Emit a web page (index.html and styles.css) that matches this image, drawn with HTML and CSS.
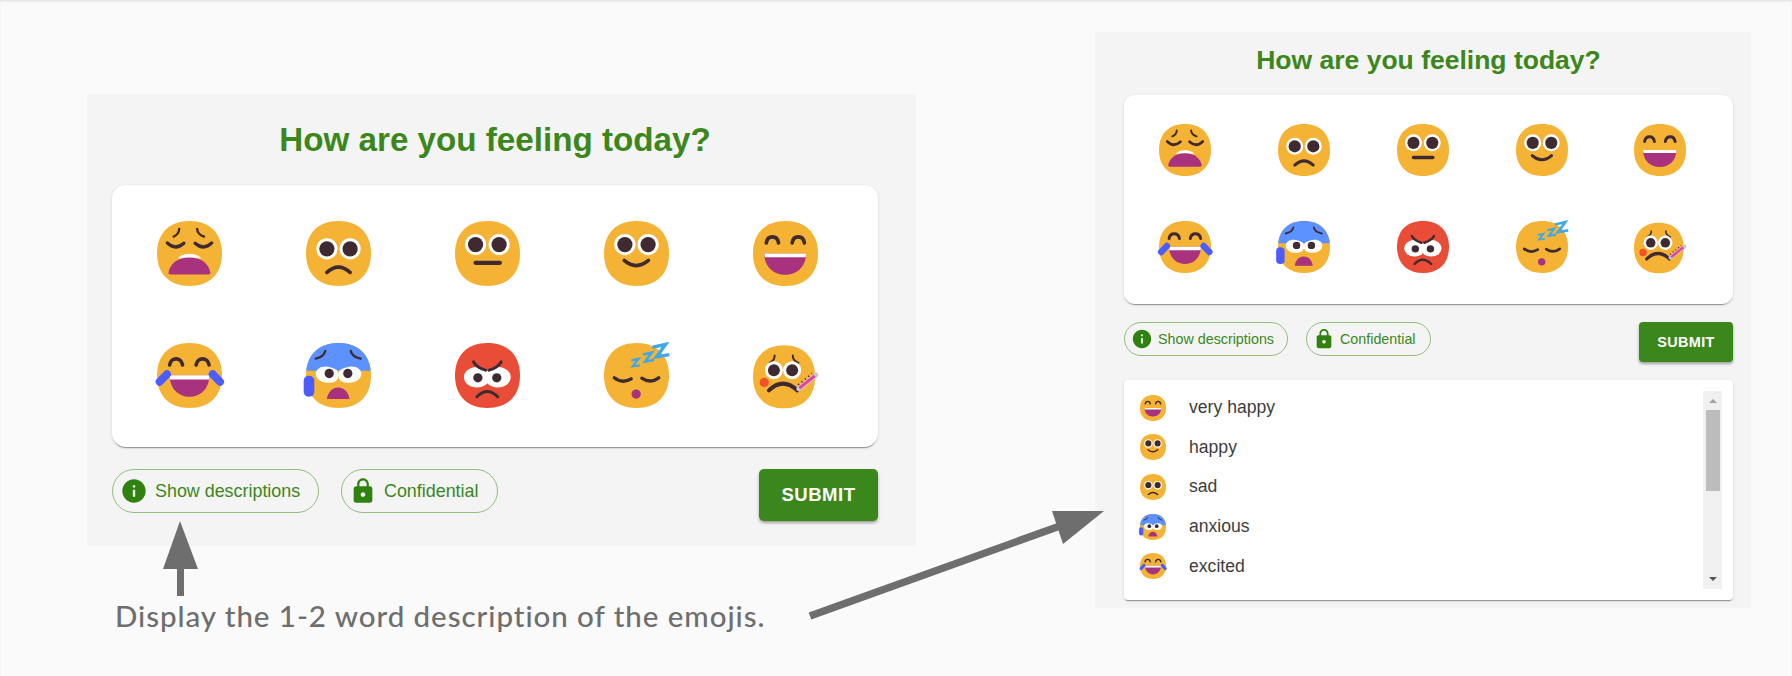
FILE: index.html
```html
<!DOCTYPE html>
<html lang="en">
<head>
<meta charset="utf-8">
<title>How are you feeling today?</title>
<link rel="stylesheet" href="styles.css">
</head>
<body>
<svg class="defs" width="0" height="0" aria-hidden="true">
  <defs>
    <path id="face" d="M98 0C160 0 196 38 196 98C196 158 160 196 98 196C36 196 0 158 0 98C0 38 36 0 98 0Z"/>
    <g id="e-weary">
      <use href="#face" fill="#f5b335"/>
      <g fill="none" stroke="#402a32" stroke-linecap="round">
        <path d="M31 66Q55 90 81 67" stroke-width="10"/><path d="M115 67Q141 90 165 66" stroke-width="10"/>
        <path d="M67 24Q66 40 50 47" stroke-width="7"/><path d="M121 24Q122 40 142 47" stroke-width="7"/>
      </g>
      <path d="M62 112C72 103 85 99 98 99C111 99 124 103 134 112Z" fill="#fff"/>
      <path d="M35 154C40 130 60 110 98 110C136 110 155 130 161 154C162 160 158 161 155 161L42 161C37 161 34 160 35 154Z" fill="#a9327f"/>
    </g>
    <g id="e-sad">
      <use href="#face" fill="#f5b335"/>
      <circle cx="63" cy="84" r="32" fill="#fff"/><circle cx="133" cy="84" r="32" fill="#fff"/>
      <circle cx="63" cy="84" r="23" fill="#402a32"/><circle cx="133" cy="84" r="23" fill="#402a32"/>
      <path d="M63 155Q98 123 133 155" fill="none" stroke="#402a32" stroke-width="11" stroke-linecap="round"/>
    </g>
    <g id="e-neutral">
      <use href="#face" fill="#f5b335"/>
      <circle cx="62" cy="71" r="32" fill="#fff"/><circle cx="133" cy="71" r="32" fill="#fff"/>
      <circle cx="62" cy="71" r="23" fill="#402a32"/><circle cx="133" cy="71" r="23" fill="#402a32"/>
      <path d="M62 126H135" fill="none" stroke="#402a32" stroke-width="13" stroke-linecap="round"/>
    </g>
    <g id="e-smile">
      <use href="#face" fill="#f5b335"/>
      <circle cx="63" cy="71" r="32" fill="#fff"/><circle cx="133" cy="71" r="32" fill="#fff"/>
      <circle cx="63" cy="71" r="23" fill="#402a32"/><circle cx="133" cy="71" r="23" fill="#402a32"/>
      <path d="M61 119Q97 150 134 119" fill="none" stroke="#402a32" stroke-width="11" stroke-linecap="round"/>
    </g>
    <g id="e-grin">
      <use href="#face" fill="#f5b335"/>
      <g fill="none" stroke="#402a32" stroke-width="11" stroke-linecap="round">
        <path d="M40 66C44 42 73 42 77 66"/><path d="M118 66C122 42 151 42 155 66"/>
      </g>
      <path d="M34 98H160C160 140 130 162 97 162C64 162 34 140 34 98Z" fill="#a9327f"/>
      <path d="M34 98H160L159 109H36Z" fill="#fff"/>
    </g>
    <g id="e-joy">
      <use href="#face" fill="#f5b335"/>
      <g fill="none" stroke="#402a32" stroke-width="11" stroke-linecap="round">
        <path d="M38 66C42 42 73 42 77 66"/><path d="M118 66C122 42 153 42 157 66"/>
      </g>
      <path d="M38 97H158C158 138 130 162 98 162C66 162 38 138 38 97Z" fill="#a9327f"/>
      <path d="M38 97H158L157 110H39Z" fill="#fff"/>
      <g fill="none" stroke="#4d5cff" stroke-width="24" stroke-linecap="round">
        <path d="M30 94L8 117"/><path d="M168 94L190 117"/>
      </g>
    </g>
    <clipPath id="top-clip"><rect x="0" y="0" width="196" height="84"/></clipPath>
    <g id="e-anxious">
      <use href="#face" fill="#f5b335"/>
      <use href="#face" fill="#5c92ff" clip-path="url(#top-clip)"/>
      <g fill="none" stroke="#402a32" stroke-width="7" stroke-linecap="round">
        <path d="M58 24Q54 42 29 47"/><path d="M135 24Q139 42 165 47"/>
      </g>
      <path d="M29 92C32 70 62 62 94 82C103 96 100 120 70 120C48 120 29 110 29 92Z" fill="#fff"/>
      <path d="M167 92C164 70 134 62 102 82C93 96 96 120 126 120C148 120 167 110 167 92Z" fill="#fff"/>
      <circle cx="70" cy="92" r="14" fill="#402a32"/><circle cx="126" cy="92" r="14" fill="#402a32"/>
      <path d="M63 169C65 150 78 134 97 134C116 134 129 150 131 169Z" fill="#a9327f"/>
      <rect x="-7" y="99" width="32" height="63" rx="15" fill="#4d5cff"/>
    </g>
    <g id="e-angry">
      <use href="#face" fill="#e94d38"/>
      <ellipse cx="66" cy="103" rx="39" ry="31" fill="#fff"/><ellipse cx="129" cy="103" rx="39" ry="31" fill="#fff"/>
      <circle cx="69" cy="105" r="14" fill="#402a32"/><circle cx="126" cy="105" r="14" fill="#402a32"/>
      <g fill="none" stroke="#402a32" stroke-width="9" stroke-linecap="round">
        <path d="M56 57Q66 74 92 82"/><path d="M139 57Q129 74 103 82"/>
        <path d="M66 162Q97 130 129 162"/>
      </g>
    </g>
    <g id="e-sleep">
      <use href="#face" fill="#f5b335"/>
      <g fill="none" stroke="#402a32" stroke-width="10" stroke-linecap="round">
        <path d="M31 105Q55 124 82 108"/><path d="M114 106Q140 124 165 105"/>
      </g>
      <circle cx="97" cy="154" r="14" fill="#a9327f"/>
      <g fill="none" stroke="#3fa9e8" stroke-linejoin="miter" stroke-linecap="square">
        <polyline points="86,52 104,48 87,70 105,68" stroke-width="7"/>
        <polyline points="121,34 144,29 124,56 147,52" stroke-width="8"/>
        <polyline points="151,12 186,4 158,42 192,36" stroke-width="10"/>
      </g>
    </g>
    <g id="e-sick">
      <g transform="translate(0 7) scale(.955 .97)"><use href="#face" fill="#f5b335"/></g>
      <g fill="none" stroke="#402a32" stroke-width="6" stroke-linecap="round">
        <path d="M65 38Q66 52 50 60"/><path d="M120 38Q119 52 137 60"/>
      </g>
      <circle cx="63" cy="82" r="27" fill="#fff"/><circle cx="118" cy="82" r="27" fill="#fff"/>
      <circle cx="63" cy="82" r="18" fill="#402a32"/><circle cx="118" cy="82" r="18" fill="#402a32"/>
      <circle cx="34" cy="119" r="14" fill="#f4502a"/>
      <path d="M48 143Q90 102 134 143" fill="none" stroke="#402a32" stroke-width="12" stroke-linecap="round"/>
      <path d="M138 138L190 96" fill="none" stroke="#c9c9c9" stroke-width="15" stroke-linecap="round"/>
      <path d="M140 136L186 99" fill="none" stroke="#e83e9c" stroke-width="9"/>
      <path d="M136 126L178 92" fill="none" stroke="#402a32" stroke-width="5" stroke-dasharray="4 9"/>
    </g>
  </defs>
</svg>

<main class="page">
  <section class="panel panel-large">
    <h1 class="heading">How are you feeling today?</h1>
    <div class="card emoji-grid">
      <svg class="emoji" viewBox="0 0 196 196"><use href="#e-weary"/></svg>
      <svg class="emoji" viewBox="0 0 196 196"><use href="#e-sad"/></svg>
      <svg class="emoji" viewBox="0 0 196 196"><use href="#e-neutral"/></svg>
      <svg class="emoji" viewBox="0 0 196 196"><use href="#e-smile"/></svg>
      <svg class="emoji" viewBox="0 0 196 196"><use href="#e-grin"/></svg>
      <svg class="emoji" viewBox="0 0 196 196"><use href="#e-joy"/></svg>
      <svg class="emoji" viewBox="0 0 196 196"><use href="#e-anxious"/></svg>
      <svg class="emoji" viewBox="0 0 196 196"><use href="#e-angry"/></svg>
      <svg class="emoji" viewBox="0 0 196 196"><use href="#e-sleep"/></svg>
      <svg class="emoji" viewBox="0 0 196 196"><use href="#e-sick"/></svg>
    </div>
    <div class="actions">
      <span class="chip chip-show"><svg class="chip-icon" viewBox="0 0 24 24"><path d="M12 2C6.48 2 2 6.48 2 12s4.48 10 10 10 10-4.48 10-10S17.52 2 12 2zm1 15h-2v-6h2v6zm0-8h-2V7h2v2z"/></svg>Show descriptions</span>
      <span class="chip chip-conf"><svg class="chip-icon" viewBox="0 0 24 24"><path d="M18 8h-1V6c0-2.76-2.24-5-5-5S7 3.24 7 6v2H6c-1.1 0-2 .9-2 2v10c0 1.1.9 2 2 2h12c1.1 0 2-.9 2-2V10c0-1.1-.9-2-2-2zm-6 9c-1.1 0-2-.9-2-2s.9-2 2-2 2 .9 2 2-.9 2-2 2zm3.1-9H8.9V6c0-1.71 1.39-3.1 3.1-3.1 1.71 0 3.1 1.39 3.1 3.1v2z"/></svg>Confidential</span>
      <button class="submit" type="button">Submit</button>
    </div>
  </section>

  <section class="panel panel-small">
    <h1 class="heading">How are you feeling today?</h1>
    <div class="card emoji-grid">
      <svg class="emoji" viewBox="0 0 196 196"><use href="#e-weary"/></svg>
      <svg class="emoji" viewBox="0 0 196 196"><use href="#e-sad"/></svg>
      <svg class="emoji" viewBox="0 0 196 196"><use href="#e-neutral"/></svg>
      <svg class="emoji" viewBox="0 0 196 196"><use href="#e-smile"/></svg>
      <svg class="emoji" viewBox="0 0 196 196"><use href="#e-grin"/></svg>
      <svg class="emoji" viewBox="0 0 196 196"><use href="#e-joy"/></svg>
      <svg class="emoji" viewBox="0 0 196 196"><use href="#e-anxious"/></svg>
      <svg class="emoji" viewBox="0 0 196 196"><use href="#e-angry"/></svg>
      <svg class="emoji" viewBox="0 0 196 196"><use href="#e-sleep"/></svg>
      <svg class="emoji" viewBox="0 0 196 196"><use href="#e-sick"/></svg>
    </div>
    <div class="actions">
      <span class="chip chip-show"><svg class="chip-icon" viewBox="0 0 24 24"><path d="M12 2C6.48 2 2 6.48 2 12s4.48 10 10 10 10-4.48 10-10S17.52 2 12 2zm1 15h-2v-6h2v6zm0-8h-2V7h2v2z"/></svg>Show descriptions</span>
      <span class="chip chip-conf"><svg class="chip-icon" viewBox="0 0 24 24"><path d="M18 8h-1V6c0-2.76-2.24-5-5-5S7 3.24 7 6v2H6c-1.1 0-2 .9-2 2v10c0 1.1.9 2 2 2h12c1.1 0 2-.9 2-2V10c0-1.1-.9-2-2-2zm-6 9c-1.1 0-2-.9-2-2s.9-2 2-2 2 .9 2 2-.9 2-2 2zm3.1-9H8.9V6c0-1.71 1.39-3.1 3.1-3.1 1.71 0 3.1 1.39 3.1 3.1v2z"/></svg>Confidential</span>
      <button class="submit" type="button">Submit</button>
    </div>
    <div class="desc-card">
      <ul class="desc-list">
        <li class="desc-row"><svg class="desc-emoji" viewBox="0 0 196 196"><use href="#e-grin"/></svg>very happy</li>
        <li class="desc-row"><svg class="desc-emoji" viewBox="0 0 196 196"><use href="#e-smile"/></svg>happy</li>
        <li class="desc-row"><svg class="desc-emoji" viewBox="0 0 196 196"><use href="#e-sad"/></svg>sad</li>
        <li class="desc-row"><svg class="desc-emoji" viewBox="0 0 196 196"><use href="#e-anxious"/></svg>anxious</li>
        <li class="desc-row"><svg class="desc-emoji" viewBox="0 0 196 196"><use href="#e-joy"/></svg>excited</li>
      </ul>
      <div class="scrollbar">
        <span class="scroll-up"></span>
        <span class="scroll-thumb"></span>
        <span class="scroll-down"></span>
      </div>
    </div>
  </section>

  <svg class="arrows" viewBox="0 0 1792 676" aria-hidden="true">
    <path class="arrow-fill" d="M180 521L198 569H184V596H177V569H163Z"/>
    <path class="arrow-fill" d="M1104 511L1052 511L1063 544Z"/>
    <path class="arrow-line" d="M810 616L1060 526"/>
  </svg>
  <p class="caption">Display the 1-2 word description of the emojis.</p>
</main>
</body>
</html>
```
FILE: styles.css
```css
* { box-sizing: border-box; }
html, body { margin: 0; height: 100%; }
body {
  background: #fafafa;
  font-family: "Liberation Sans", Arial, sans-serif;
  overflow: hidden;
}
.defs { position: absolute; }
.page {
  position: relative;
  width: 1792px;
  height: 676px;
  display: flex;
  align-items: flex-start;
  box-shadow: inset 0 2px 3px -1px rgba(0, 0, 0, .12);
}
.panel { background: #f4f4f4; }
.panel-large {
  width: 829px;
  height: 452px;
  margin: 94px 0 0 87px;
  padding: 0 38px 0 25px;
}
.panel-small {
  width: 656px;
  height: 576px;
  margin: 32px 0 0 179px;
  padding: 0 18px 0 29px;
}
.heading {
  margin: 0;
  color: #3b871b;
  text-align: center;
  font-weight: 700;
}
.panel-large .heading { font-size: 33.2px; line-height: 91px; }
.panel-small .heading { font-size: 26.5px; line-height: 56px; padding-bottom: 7px; }
.card, .desc-card {
  background: #fff;
  box-shadow: 0 2px 1px -1px rgba(0, 0, 0, .35), 0 1px 3px rgba(0, 0, 0, .14);
}
.emoji-grid { display: grid; justify-items: center; align-items: start; }
.panel-large .emoji-grid {
  height: 262px;
  padding: 36px 0 0 3px;
  border-radius: 14px;
  grid-template-columns: repeat(5, 149px);
  grid-auto-rows: 122px;
}
.panel-small .emoji-grid {
  height: 209px;
  padding: 29px 0 0 2px;
  border-radius: 11px;
  grid-template-columns: repeat(5, 118.75px);
  grid-auto-rows: 97px;
}
.emoji, .desc-emoji { display: block; overflow: visible; }
.panel-large .emoji { width: 65px; height: 65px; }
.panel-small .emoji { width: 52px; height: 52px; }
.actions { display: flex; align-items: flex-start; }
.panel-large .actions { margin-top: 22px; }
.panel-small .actions { margin-top: 18px; }
.chip {
  display: inline-flex;
  align-items: center;
  color: #3b871b;
  border: 1.5px solid #90bf7c;
  border-radius: 999px;
  white-space: nowrap;
}
.chip-icon { display: block; fill: #2f8210; flex: none; }
.panel-large .chip { height: 44px; font-size: 17.9px; padding-left: 7px; }
.panel-large .chip-icon { width: 28px; height: 28px; margin-right: 7px; }
.panel-large .chip-show { width: 207px; }
.panel-large .chip-conf { width: 157px; margin-left: 22px; }
.panel-small .chip { height: 34px; font-size: 14.3px; padding-left: 6px; }
.panel-small .chip-icon { width: 22px; height: 22px; margin-right: 5px; }
.panel-small .chip-show { width: 164px; }
.panel-small .chip-conf { width: 125px; margin-left: 18px; }
.submit {
  margin-left: auto;
  border: 0;
  background: #3b871b;
  color: #fff;
  font-family: inherit;
  font-weight: 700;
  text-transform: uppercase;
  box-shadow: 0 2px 3px rgba(0, 0, 0, .35);
}
.panel-large .submit { width: 119px; height: 52px; border-radius: 5px; font-size: 18.5px; letter-spacing: .5px; }
.panel-small .submit { width: 94px; height: 40px; border-radius: 4px; font-size: 14.4px; letter-spacing: .4px; }
.desc-card {
  display: flex;
  justify-content: space-between;
  height: 220px;
  margin-top: 18px;
  padding: 11px 11px 11px 0;
  border-radius: 4px;
}
.desc-list {
  list-style: none;
  margin: -3px 0 0;
  padding: 0 0 0 16px;
}
.desc-row {
  display: flex;
  align-items: center;
  height: 39.6px;
  font-size: 17.6px;
  color: #3d3d3d;
}
.desc-emoji { width: 26px; height: 26px; margin-right: 23px; }
.scrollbar {
  position: relative;
  width: 19px;
  background: #f0f0f0;
}
.scroll-thumb {
  position: absolute;
  top: 19px;
  left: 3px;
  width: 14px;
  height: 81px;
  background: #bcbcbc;
}
.scroll-up, .scroll-down {
  position: absolute;
  left: 5.5px;
  width: 0;
  height: 0;
  border-left: 4px solid transparent;
  border-right: 4px solid transparent;
}
.scroll-up { top: 8px; border-bottom: 4px solid #a3a3a3; }
.scroll-down { bottom: 8px; border-top: 4px solid #555; }
.arrows {
  position: absolute;
  inset: 0;
  width: 1792px;
  height: 676px;
  pointer-events: none;
}
.arrow-fill { fill: #6e6e6e; }
.arrow-line { fill: none; stroke: #6e6e6e; stroke-width: 7.5; }
.caption {
  position: absolute;
  left: 115px;
  top: 598px;
  margin: 0;
  font-family: Lato, "Open Sans", sans-serif;
  font-size: 29.5px;
  line-height: 36px;
  font-weight: 500;
  letter-spacing: .95px;
  color: #6e6e6e;
  white-space: nowrap;
}
```
